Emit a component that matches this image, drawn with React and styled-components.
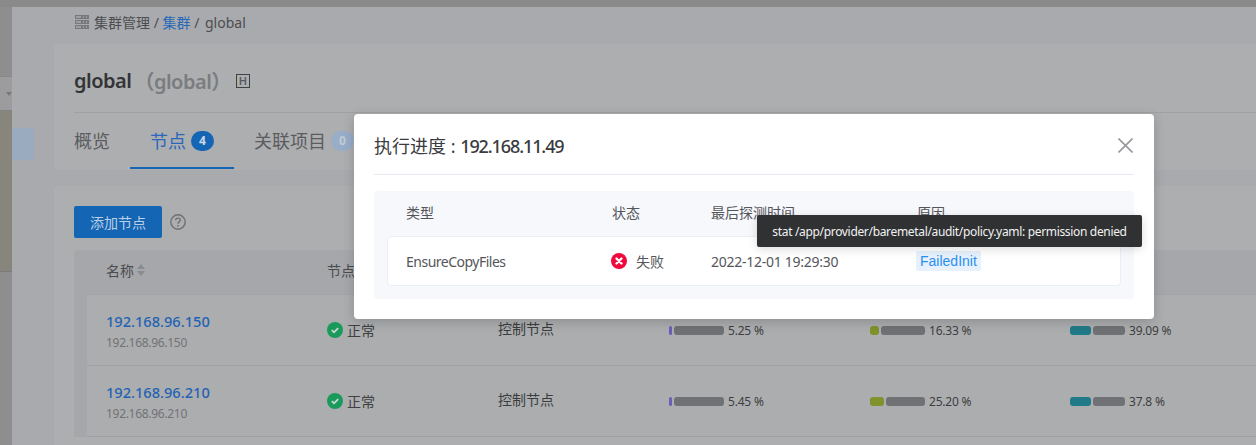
import styled, { createGlobalStyle } from "styled-components"

const GlobalStyle = createGlobalStyle`
  html, body {
    margin: 0;
    padding: 0;
    background: #8b8b8b;
  }
  * {
    box-sizing: border-box;
  }
`

const Page = styled.div`
  position: relative;
  width: 1256px;
  height: 445px;
  overflow: hidden;
  padding-top: 7px;
  background: #8a8a8a;
  font-family: "Noto Sans", "Noto Sans CJK SC", sans-serif;
  font-size: 14px;
  color: #3b3c3e;
`
const Layout = styled.div`
  display: flex;
  height: 438px;
`
const LeftStrip = styled.div`
  width: 12px;
  flex: none;
  display: flex;
  flex-direction: column;
  background: #8e8e8e;
`
const StripTop = styled.div`
  height: 69px;
  border-top: 1px solid #8e8e8e;
`
const StripBar = styled.div`
  height: 35px;
  background: #9c9c9e;
  border-top: 1px solid #888;
  border-bottom: 1px solid #838383;
  display: flex;
  align-items: center;
  justify-content: flex-end;
`
const StripCaret = styled.div`
  width: 0;
  height: 0;
  border-left: 3px solid transparent;
  border-right: 3px solid transparent;
  border-top: 4px solid #77787a;
`
const StripImage = styled.div`
  height: 161px;
  background: #87857c;
  border-bottom: 1px solid #7c7c7c;
`
const SideNav = styled.div`
  width: 42px;
  flex: none;
  padding-top: 121px;
  background: #a9aaae;
`
const SideItem = styled.div`
  width: 22px;
  height: 32px;
  background: #9aabbf;
  border-radius: 0 2px 2px 0;
`
const Content = styled.div`
  flex: 1;
  min-width: 0;
  background: #a9aaad;
`
const Breadcrumb = styled.div`
  height: 37px;
  padding: 0 0 8px 21px;
  display: flex;
  align-items: center;
  gap: 5px;
  font-size: 14px;
  color: #4c4d50;
`
const CrumbLink = styled.span`
  color: #2668b8;
`
const CrumbLast = styled.span`
  margin-left: 2px;
`
const HeaderCard = styled.div`
  height: 126px;
  background: #adaeb0;
  border-radius: 4px 0 0 4px;
  padding-left: 20px;
`
const TitleRow = styled.div`
  height: 69px;
  padding-top: 5px;
  display: flex;
  align-items: center;
  border-bottom: 1px solid #a0a1a3;
`
const Title = styled.span`
  font-size: 20px;
  font-weight: 600;
  letter-spacing: -0.5px;
  color: #333436;
`
const SubTitle = styled.span`
  margin-left: 3px;
  font-size: 20px;
  font-weight: 600;
  letter-spacing: -0.5px;
  color: #7b7c7f;
`
const HBadge = styled.span`
  width: 14px;
  height: 14px;
  margin-left: 5px;
  border: 1px solid #3f4042;
  display: flex;
  align-items: center;
  justify-content: center;
  font-size: 11px;
  font-weight: 600;
  color: #5a5b5e;
`
const Tabs = styled.div`
  display: flex;
  height: 56px;
`
const Tab = styled.div`
  display: flex;
  align-items: center;
  gap: 5px;
  height: 57px;
  margin-top: -1px;
  padding: 0 20px;
  font-size: 18px;
  color: ${(p) => (p.$active ? "#2a68ba" : "#5b5c5f")};
  border-bottom: 2px solid ${(p) => (p.$active ? "#1565b5" : "transparent")};
  &:first-child {
    padding-left: 0;
  }
`
const CountBadge = styled.span`
  width: 23px;
  height: 20px;
  margin-top: 2px;
  border-radius: 10px;
  background: ${(p) => (p.$muted ? "#97adc8" : "#1565b5")};
  color: ${(p) => (p.$muted ? "#c2cad4" : "#c9d8e9")};
  font-size: 12px;
  font-weight: 700;
  display: flex;
  align-items: center;
  justify-content: center;
`
const ListCard = styled.div`
  margin-top: 16px;
  height: 259px;
  background: #adaeb0;
  border-radius: 4px 0 0 0;
  padding: 20px 0 0 20px;
`
const Toolbar = styled.div`
  display: flex;
  align-items: center;
  gap: 8px;
  height: 32px;
`
const AddButton = styled.div`
  width: 88px;
  height: 32px;
  border-radius: 2px;
  background: #1565b5;
  color: #bccfe4;
  font-size: 14px;
  display: flex;
  align-items: center;
  justify-content: center;
`
const TablePanel = styled.div`
  margin-top: 12px;
  background: #a6a7aa;
  border-radius: 4px 0 0 0;
  padding-left: 13px;
`
const TableHead = styled.div`
  height: 45px;
  padding: 0 0 4px 19px;
  display: grid;
  grid-template-columns: 221px 171px 171px 201px 200px 1fr;
  align-items: center;
  border-bottom: 1px solid #a2a3a5;
  color: #4a4b4e;
`
const HeadCell = styled.div`
  display: flex;
  align-items: center;
  gap: 3px;
`
const Row = styled.div`
  height: 71px;
  padding: 0 0 2px 19px;
  display: grid;
  grid-template-columns: 221px 171px 171px 201px 200px 1fr;
  align-items: center;
  background: #acadaf;
  border-bottom: 1px solid #a0a1a3;
`
const NameCell = styled.div`
  display: flex;
  flex-direction: column;
  gap: 3px;
  margin-top: 4px;
`
const NodeLink = styled.span`
  font-size: 14.6px;
  font-weight: 500;
  color: #1f63b4;
  line-height: 20px;
`
const NodeIp = styled.span`
  font-size: 12px;
  letter-spacing: -0.3px;
  color: #727376;
  line-height: 17px;
`
const StatusCell = styled.div`
  display: flex;
  align-items: center;
  gap: 4px;
  margin-top: 1px;
  color: #3f4042;
`
const RoleCell = styled.div`
  margin-top: -2px;
`
const UsageCell = styled.div`
  display: flex;
  align-items: center;
  gap: 4px;
  margin-top: 2px;
  font-size: 12px;
  letter-spacing: -0.2px;
  color: #3d3e41;
`
const Bar = styled.div`
  width: 55px;
  height: 9px;
  display: flex;
  gap: 2px;
`
const BarFill = styled.div`
  height: 9px;
  flex: none;
  border-radius: 3px;
  background: ${(p) => p.$color};
`
const BarRest = styled.div`
  flex: 1;
  height: 9px;
  border-radius: 3px;
  background: #707174;
`

const Modal = styled.div`
  position: absolute;
  left: 354px;
  top: 114px;
  width: 800px;
  height: 205px;
  background: #fff;
  border-radius: 4px;
  padding: 0 20px;
  box-shadow: 0 3px 12px rgba(0, 0, 0, 0.18);
`
const ModalHead = styled.div`
  height: 61px;
  padding-top: 2px;
  display: flex;
  align-items: center;
  justify-content: space-between;
  border-bottom: 1px solid #e8ebf2;
`
const ModalTitle = styled.div`
  font-size: 18px;
  color: #3a3b3f;
`
const ModalIp = styled.span`
  font-weight: 500;
  letter-spacing: -1.1px;
`
const CloseButton = styled.div`
  display: flex;
  margin-right: 1px;
`
const ProgressPanel = styled.div`
  margin-top: 16px;
  height: 108px;
  background: #f7f8fc;
  border-radius: 4px;
  padding: 0 13px;
`
const ProgressHead = styled.div`
  height: 45px;
  padding: 0 0 3px 19px;
  display: grid;
  grid-template-columns: 206px 99px 206px 1fr;
  align-items: center;
  font-size: 14px;
  color: #54565a;
`
const ProgressRow = styled.div`
  height: 50px;
  padding-left: 18px;
  display: grid;
  grid-template-columns: 206px 99px 206px 1fr;
  align-items: center;
  background: #fff;
  border: 1px solid #ebeef5;
  border-radius: 4px;
  font-size: 14px;
  color: #54565a;
`
const StepName = styled.div`
  letter-spacing: -0.5px;
`
const ProbeTime = styled.div`
  letter-spacing: -0.27px;
`
const FailStatus = styled.div`
  display: flex;
  align-items: center;
  gap: 9px;
  margin-left: -1px;
`
const ReasonTag = styled.span`
  justify-self: start;
  margin-left: -1px;
  height: 20px;
  padding: 0 4px;
  border-radius: 2px;
  background: #e6f1fc;
  color: #2b8ff1;
  font-family: "Liberation Sans", Arial, sans-serif;
  font-size: 14px;
  line-height: 20px;
`
const Tooltip = styled.div`
  position: absolute;
  left: 403px;
  top: 101px;
  width: 385px;
  height: 32px;
  display: flex;
  align-items: center;
  justify-content: center;
  background: #303133;
  border-radius: 2px;
  color: #f2f2f2;
  font-size: 12px;
  letter-spacing: -0.33px;
  white-space: nowrap;
  box-shadow: 0 2px 10px rgba(0, 0, 0, 0.15);
`

const ServerIcon = () => (
  <svg width="14" height="14" viewBox="0 0 14 14">
    <path d="M0 0h14v4H0zM0 5h14v4H0zM0 10h14v4H0z" fill="#77787b" />
    <path d="M1 2h5M8 2h1M11 2h1M1 7h5M8 7h1M11 7h1M1 12h5M8 12h1M11 12h1" stroke="#c4c5c7" strokeWidth="1" />
  </svg>
)
const HelpIcon = () => (
  <svg width="16" height="16" viewBox="0 0 16 16" fill="none">
    <circle cx="8" cy="8" r="7.2" stroke="#6f7073" strokeWidth="1.4" />
    <path d="M5.7 6.2c0-1.3 1-2.1 2.3-2.1s2.3.8 2.3 2c0 1.8-2.3 1.8-2.3 3.6" stroke="#6f7073" strokeWidth="1.4" />
    <circle cx="8" cy="11.8" r="0.9" fill="#6f7073" />
  </svg>
)
const SortIcon = () => (
  <svg width="8" height="12" viewBox="0 0 8 12">
    <path d="M4 0l4 5H0zM0 7h8l-4 5z" fill="#8b8c8f" />
  </svg>
)
const OkIcon = () => (
  <svg width="16" height="16" viewBox="0 0 16 16" fill="none">
    <circle cx="8" cy="8" r="8" fill="#199a5a" />
    <path d="M4.8 8.2l2.2 2.1 4.2-4.2" stroke="#c8d8d0" strokeWidth="1.8" />
  </svg>
)
const FailIcon = () => (
  <svg width="16" height="16" viewBox="0 0 16 16" fill="none">
    <circle cx="8" cy="8" r="8" fill="#ee0a3c" />
    <path d="M5.5 5.5l5 5M10.5 5.5l-5 5" stroke="#fff" strokeWidth="2.4" strokeLinecap="round" />
  </svg>
)
const CloseIcon = () => (
  <svg width="15" height="15" viewBox="0 0 15 15" fill="none">
    <path d="M0.5 0.5l14 14M14.5 0.5l-14 14" stroke="#96989c" strokeWidth="1.6" />
  </svg>
)

const Usage = ({ value, label, color }) => (
  <UsageCell>
    <Bar>
      <BarFill $color={color} style={{ width: `${(value * 55) / 100}px` }} />
      <BarRest />
    </Bar>
    {label}
  </UsageCell>
)

const nodes = [
  { ip: "192.168.96.150", cpu: 5.25, mem: 16.33, memLabel: "16.33 %", disk: 39.09, diskLabel: "39.09 %" },
  { ip: "192.168.96.210", cpu: 5.45, mem: 25.2, memLabel: "25.20 %", disk: 37.8, diskLabel: "37.8 %" },
]

const App = () => {
  return (
    <Page>
      <GlobalStyle />
      <Layout>
        <LeftStrip>
          <StripTop />
          <StripBar>
            <StripCaret />
          </StripBar>
          <StripImage />
        </LeftStrip>
        <SideNav>
          <SideItem />
        </SideNav>
        <Content>
          <Breadcrumb>
            <ServerIcon />
            <span>
              集群管理 / <CrumbLink>集群</CrumbLink> / <CrumbLast>global</CrumbLast>
            </span>
          </Breadcrumb>
          <HeaderCard>
            <TitleRow>
              <Title>global</Title>
              <SubTitle>（global）</SubTitle>
              <HBadge>H</HBadge>
            </TitleRow>
            <Tabs>
              <Tab>概览</Tab>
              <Tab $active>
                节点
                <CountBadge>4</CountBadge>
              </Tab>
              <Tab>
                关联项目
                <CountBadge $muted>0</CountBadge>
              </Tab>
            </Tabs>
          </HeaderCard>
          <ListCard>
            <Toolbar>
              <AddButton>添加节点</AddButton>
              <HelpIcon />
            </Toolbar>
            <TablePanel>
              <TableHead>
                <HeadCell>
                  名称
                  <SortIcon />
                </HeadCell>
                <HeadCell>节点状态</HeadCell>
              </TableHead>
              {nodes.map((n) => (
                <Row key={n.ip}>
                  <NameCell>
                    <NodeLink>{n.ip}</NodeLink>
                    <NodeIp>{n.ip}</NodeIp>
                  </NameCell>
                  <StatusCell>
                    <OkIcon />
                    正常
                  </StatusCell>
                  <RoleCell>控制节点</RoleCell>
                  <Usage value={n.cpu} label={`${n.cpu} %`} color="#6a5eb8" />
                  <Usage value={n.mem} label={n.memLabel} color="#80922b" />
                  <Usage value={n.disk} label={n.diskLabel} color="#217a87" />
                </Row>
              ))}
            </TablePanel>
          </ListCard>
        </Content>
      </Layout>

      <Modal>
        <ModalHead>
          <ModalTitle>
            执行进度 : <ModalIp>192.168.11.49</ModalIp>
          </ModalTitle>
          <CloseButton>
            <CloseIcon />
          </CloseButton>
        </ModalHead>
        <ProgressPanel>
          <ProgressHead>
            <div>类型</div>
            <div>状态</div>
            <div>最后探测时间</div>
            <div>原因</div>
          </ProgressHead>
          <ProgressRow>
            <StepName>EnsureCopyFiles</StepName>
            <FailStatus>
              <FailIcon />
              失败
            </FailStatus>
            <ProbeTime>2022-12-01 19:29:30</ProbeTime>
            <ReasonTag>FailedInit</ReasonTag>
          </ProgressRow>
        </ProgressPanel>
        <Tooltip>stat /app/provider/baremetal/audit/policy.yaml: permission denied</Tooltip>
      </Modal>
    </Page>
  )
}

export default App
